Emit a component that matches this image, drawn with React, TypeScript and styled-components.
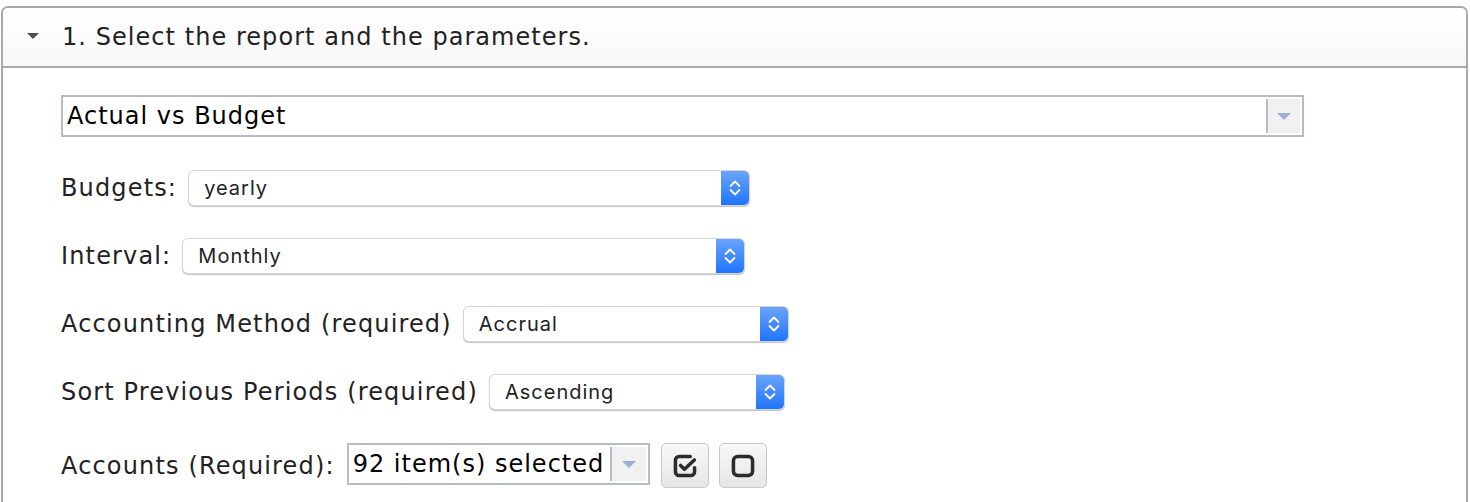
import React from "react";
import styled, { createGlobalStyle } from "styled-components";

const GlobalStyle = createGlobalStyle`
  html, body {
    margin: 0;
    padding: 0;
    background: #fff;
  }
  body {
    font-family: "DejaVu Sans", Verdana, sans-serif;
    color: #222;
  }
`;

const FIELDS = [
  { id: "budgets", label: "Budgets:", value: "yearly", width: 560 },
  { id: "interval", label: "Interval:", value: "Monthly", width: 561 },
  { id: "method", label: "Accounting Method (required)", value: "Accrual", width: 324 },
  { id: "sort", label: "Sort Previous Periods (required)", value: "Ascending", width: 294 },
];

const Stepper = () => (
  <svg width="14" height="22" viewBox="0 0 14 22" fill="none">
    <path d="M2.5 9 L7 4.5 L11.5 9" stroke="#fff" strokeWidth="1.8" strokeLinecap="round" strokeLinejoin="round" />
    <path d="M2.5 13 L7 17.5 L11.5 13" stroke="#fff" strokeWidth="1.8" strokeLinecap="round" strokeLinejoin="round" />
  </svg>
);

const CheckAllIcon = () => (
  <svg width="28" height="28" viewBox="0 0 24 24" fill="none">
    <path d="M16.5 3.8 H7 A3.2 3.2 0 0 0 3.8 7 V17 A3.2 3.2 0 0 0 7 20.2 H17 A3.2 3.2 0 0 0 20.2 17 V13.5" stroke="#2b2b2b" strokeWidth="3" strokeLinecap="round" />
    <path d="M8.2 11.5 L11.5 14.8 L20 6.8" stroke="#2b2b2b" strokeWidth="3" strokeLinecap="round" strokeLinejoin="round" />
  </svg>
);

const UncheckIcon = () => (
  <svg width="28" height="28" viewBox="0 0 24 24" fill="none">
    <rect x="3.8" y="3.8" width="16.4" height="16.4" rx="3.6" stroke="#2b2b2b" strokeWidth="3" />
  </svg>
);

const App = () => {
  return (
    <>
      <GlobalStyle />
      <Page>
        <Panel>
          <PanelHeader>
            <Caret />
            <PanelTitle>1. Select the report and the parameters.</PanelTitle>
          </PanelHeader>
          <PanelBody>
            <ReportSelect>
              <ComboValue>Actual vs Budget</ComboValue>
              <ComboArrow $w={32}>
                <ArrowDown />
              </ComboArrow>
            </ReportSelect>

            {FIELDS.map((f) => (
              <FieldRow key={f.id}>
                <Label>{f.label}</Label>
                <MacSelect style={{ width: f.width }}>
                  <MacValue>{f.value}</MacValue>
                  <StepButton>
                    <Stepper />
                  </StepButton>
                </MacSelect>
              </FieldRow>
            ))}

            <FieldRow $last>
              <Label>Accounts (Required):</Label>
              <MultiSelect>
                <ComboValue>92 item(s) selected</ComboValue>
                <ComboArrow $w={34}>
                  <ArrowDown />
                </ComboArrow>
              </MultiSelect>
              <IconButton title="Select all">
                <CheckAllIcon />
              </IconButton>
              <IconButton title="Clear">
                <UncheckIcon />
              </IconButton>
            </FieldRow>
          </PanelBody>
        </Panel>
      </Page>
    </>
  );
};

const Page = styled.div`
  padding: 6px 2px 0 1px;
  height: 502px;
  box-sizing: border-box;
  overflow: hidden;
`;

const Panel = styled.section`
  border: 2px solid #a9a9a9;
  border-radius: 7px 7px 0 0;
  border-bottom: none;
  height: 600px;
  background: #fff;
`;

const PanelHeader = styled.header`
  height: 58px;
  display: flex;
  align-items: center;
  padding-left: 24px;
  background: linear-gradient(#ffffff, #f7f7f7);
  border-bottom: 2px solid #a9a9a9;
  border-radius: 5px 5px 0 0;
`;

const Caret = styled.span`
  width: 0;
  height: 0;
  border-left: 6px solid transparent;
  border-right: 6px solid transparent;
  border-top: 6px solid #4e4e4e;
  margin-right: 23px;
  margin-top: -3px;
`;

const PanelTitle = styled.h2`
  margin: 0;
  font-weight: normal;
  font-size: 24px;
  letter-spacing: 1.05px;
  color: #222;
`;

const PanelBody = styled.div`
  padding: 27px 0 0 58px;
  display: flex;
  flex-direction: column;
`;

const ReportSelect = styled.div`
  width: 1243px;
  height: 42px;
  box-sizing: border-box;
  border: 2px solid #b5bbc8;
  display: flex;
  align-items: stretch;
  margin-bottom: 34px;
`;

const ComboValue = styled.div`
  flex: 1;
  display: flex;
  align-items: center;
  padding-left: 4px;
  font-size: 24px;
  letter-spacing: 1px;
  color: #000;
  white-space: nowrap;
  overflow: hidden;
`;

const ComboArrow = styled.div<{ $w: number }>`
  width: ${({ $w }) => $w}px;
  border-left: 2px solid #b5bbc8;
  margin: 2px 2px 2px 0;
  background: #f1f1f1;
  display: flex;
  align-items: center;
  justify-content: center;
`;

const ArrowDown = styled.span`
  width: 0;
  height: 0;
  border-left: 7px solid transparent;
  border-right: 7px solid transparent;
  border-top: 7px solid #9cb0d6;
`;

const FieldRow = styled.div<{ $last?: boolean }>`
  display: flex;
  align-items: ${({ $last }) => ($last ? "flex-start" : "center")};
  height: ${({ $last }) => ($last ? "46px" : "34px")};
  margin-bottom: 34px;
`;

const Label = styled.label`
  align-self: center;
  font-size: 24px;
  letter-spacing: 1.15px;
  color: #222;
  margin-right: 12px;
  white-space: nowrap;
`;

const MacSelect = styled.div`
  height: 34px;
  box-sizing: border-box;
  display: flex;
  border-radius: 5px;
  background: #fff;
  box-shadow: 0 0 0 1px #d6d6d6, 0 1px 1px 1px #c2c2c2;
  overflow: hidden;
`;

const MacValue = styled.div`
  flex: 1;
  display: flex;
  align-items: center;
  padding-left: 15px;
  font-family: Inter, "Noto Sans", sans-serif;
  font-size: 20px;
  letter-spacing: 1px;
  color: #222;
`;

const StepButton = styled.div`
  width: 28px;
  display: flex;
  align-items: center;
  justify-content: center;
  background: linear-gradient(#6aa4fb, #1f74fb);
`;

const MultiSelect = styled.div`
  width: 303px;
  height: 42px;
  box-sizing: border-box;
  border: 2px solid #b5bbc8;
  display: flex;
  margin-right: 11px;
`;

const IconButton = styled.button`
  width: 48px;
  height: 45px;
  margin-right: 10px;
  padding: 0;
  border: 1px solid #c8c8c8;
  border-radius: 5px;
  background: linear-gradient(#f8f8f8, #e6e6e6);
  display: flex;
  align-items: center;
  justify-content: center;
  cursor: pointer;
`;

export default App;
